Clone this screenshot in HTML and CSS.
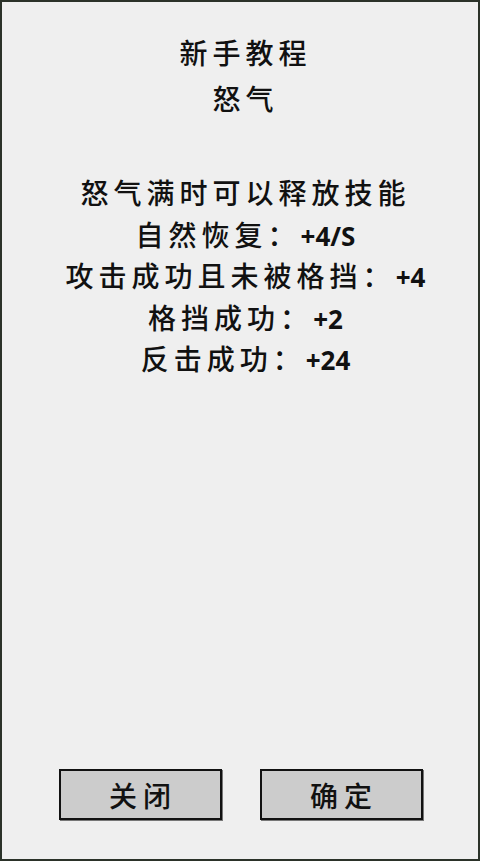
FILE: index.html
```html
<!DOCTYPE html>
<html lang="zh-CN">
<head>
<meta charset="utf-8">
<link rel="stylesheet" href="styles.css">
</head>
<body>
<div class="page">
  <div class="head">
    <div class="title">新手教程</div>
    <div class="title">怒气</div>
  </div>
  <div class="body">
    <div class="line">怒气满时可以释放技能</div>
    <div class="line">自然恢复：<span class="num">+4/S</span></div>
    <div class="line">攻击成功且未被格挡：<span class="num">+4</span></div>
    <div class="line">格挡成功：<span class="num">+2</span></div>
    <div class="line">反击成功：<span class="num">+24</span></div>
  </div>
  <div class="buttons">
    <div class="btn">关闭</div>
    <div class="btn">确定</div>
  </div>
</div>
</body>
</html>
```
FILE: styles.css
```css
html, body {
  margin: 0;
  padding: 0;
}
body {
  width: 480px;
  height: 861px;
  overflow: hidden;
  background: #efefef;
  font-family: "Noto Sans CJK SC", "Noto Sans", sans-serif;
  font-weight: 500;
  color: #111;
}
.page {
  box-sizing: border-box;
  width: 480px;
  height: 861px;
  border: 2px solid #2b3229;
  display: flex;
  flex-direction: column;
  align-items: center;
  padding: 27px 0 39px 6px;
}
.head {
  display: flex;
  flex-direction: column;
  align-items: center;
}
.title {
  font-size: 28px;
  line-height: 46px;
  letter-spacing: 5px;
  padding-left: 5px;
}
.body {
  margin-top: 51px;
  display: flex;
  flex-direction: column;
  align-items: center;
}
.line {
  font-size: 28px;
  line-height: 41.5px;
  height: 41.5px;
  letter-spacing: 5px;
  padding-left: 5px;
  white-space: nowrap;
}
.num {
  font-family: "Noto Sans", sans-serif;
  font-weight: 700;
  letter-spacing: 0;
  font-size: 26px;
  line-height: 1;
}
.buttons {
  margin-top: auto;
  display: flex;
  gap: 38px;
  margin-left: -5px;
}
.btn {
  box-sizing: border-box;
  width: 163px;
  height: 51px;
  background: #cccccc;
  border: 2px solid #111;
  box-shadow: 1px 1px 0 #777;
  display: flex;
  align-items: center;
  justify-content: center;
  font-size: 28px;
  letter-spacing: 6px;
  padding-left: 6px;
}
```
